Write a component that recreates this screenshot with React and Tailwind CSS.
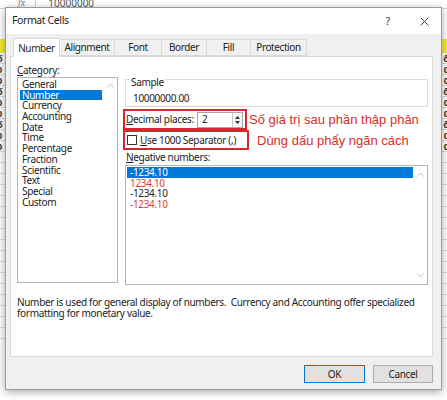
import React from 'react';

const font = { fontFamily: '"Noto Sans", "Open Sans", sans-serif' };
const redFont = { fontFamily: '"Liberation Sans", Arial, sans-serif' };

const categories = [
  'General', 'Number', 'Currency', 'Accounting', 'Date', 'Time',
  'Percentage', 'Fraction', 'Scientific', 'Text', 'Special', 'Custom',
];

const negatives = [
  { label: '-1234.10', tone: 'selected' },
  { label: '1234.10', tone: 'red' },
  { label: '-1234.10', tone: 'black' },
  { label: '-1234.10', tone: 'red' },
];

const tabs = [
  { label: 'Number', w: 'w-[47px]' },
  { label: 'Alignment', w: 'w-[55px]' },
  { label: 'Font', w: 'w-[47px]' },
  { label: 'Border', w: 'w-[45px]' },
  { label: 'Fill', w: 'w-[44px]' },
  { label: 'Protection', w: 'w-[56px]' },
];

function ScrollArrow({ up }) {
  return (
    <svg width="7" height="5" viewBox="0 0 7 5" className="text-[#c4c4c4]">
      <path d={up ? 'M0.5 4.5 L3.5 1 L6.5 4.5' : 'M0.5 0.5 L3.5 4 L6.5 0.5'} fill="none" stroke="currentColor" strokeWidth="1" />
    </svg>
  );
}

function ExcelBackdrop() {
  return (
    <div className="absolute inset-0 flex flex-col">
      <div className="h-[9px] bg-white flex items-end text-[10px] leading-none text-[#555] border-b border-[#d4d4d4]">
        <span className="ml-[18px] italic font-serif text-[#888]">fx</span>
        <span className="ml-[10px] w-px h-[9px] bg-[#ccc]" />
        <span className="ml-[12px]">10000000</span>
      </div>
      <div className="h-[30px] bg-white" />
      <div className="h-[14px] bg-[#f4ea3a]" />
      <div className="flex-1 flex flex-col">
        {Array.from({ length: 26 }).map((_, i) => (
          <div key={i} className="h-[11px] border-b border-[#dcdcdc] flex justify-between text-[9px] leading-[11px] font-bold text-[#333]">
            <span className="-ml-[3px]">{i < 9 ? (i % 3 === 0 ? 'ố' : '0') : ''}</span>
            <span className="-mr-[2px]">{i < 9 ? (i % 3 === 0 ? 'ố' : '0') : ''}</span>
          </div>
        ))}
      </div>
    </div>
  );
}

export default function App() {
  return (
    <div className="relative w-[447px] h-[400px] overflow-hidden bg-white text-[#1a1a1a]" style={font}>
      <ExcelBackdrop />

      {/* Dialog window */}
      <div className="absolute left-[5px] top-[7px] w-[437px] h-[383px] flex flex-col bg-[#f0f0f0] border border-[#9a9a9a] shadow-[0_2px_8px_rgba(0,0,0,0.35)] text-[10px] tracking-[-0.33px]">
        {/* Title bar */}
        <div className="h-[26px] shrink-0 bg-white flex items-center pl-[6px] pr-[12px]">
          <span className="text-[10.5px] tracking-[-0.4px] text-[#222]">Format Cells</span>
          <span className="ml-auto mr-[30px] text-[11px] text-[#444]">?</span>
          <svg width="9" height="9" viewBox="0 0 9 9" className="text-[#444]">
            <path d="M0.5 0.5 L8.5 8.5 M8.5 0.5 L0.5 8.5" stroke="currentColor" strokeWidth="1" />
          </svg>
        </div>

        <div className="flex-1 flex flex-col pl-[4px] pr-[8px]">
          {/* Tabs */}
          <div className="flex items-end h-[22px] pl-[3px] relative z-10 tracking-[-0.4px]">
            {tabs.map((t, i) =>
              i === 0 ? (
                <div key={t.label} className={`${t.w} h-[19px] -mb-px bg-white border border-b-0 border-[#d9d9d9] flex items-center justify-center text-[#222]`}>
                  {t.label}
                </div>
              ) : (
                <div key={t.label} className={`${t.w} h-[17px] bg-[#f0f0f0] border border-l-0 border-[#d9d9d9] flex items-center justify-center text-[#222]`}>
                  {t.label}
                </div>
              )
            )}
          </div>

          {/* Panel */}
          <div className="h-[301px] shrink-0 bg-white border border-[#d9d9d9] flex flex-col">
            <div className="flex pl-[6px] pt-[7px]">
              {/* Category column */}
              <div className="w-[101px] shrink-0 flex flex-col">
                <div className="leading-[12px] text-[#222]"><u>C</u>ategory:</div>
                <div className="mt-[1px] h-[206px] border border-[#b4b4b4] flex">
                  <div className="flex-1 pt-[1px] pl-[2px]">
                    {categories.map((c) => (
                      <div
                        key={c}
                        className={`h-[10.7px] leading-[10.7px] pl-[2px] w-[82px] ${c === 'Number' ? 'bg-[#0078d7] text-white' : 'text-[#222]'}`}
                      >
                        {c}
                      </div>
                    ))}
                  </div>
                  <div className="w-[14px] flex justify-center pt-[5px]">
                    <ScrollArrow up />
                  </div>
                </div>
              </div>

              {/* Right column */}
              <div className="ml-[5px] w-[305px] flex flex-col">
                {/* Sample */}
                <div className="ml-[2px] mt-[15px] h-[28px] border border-[#dcdcdc] relative pl-[7px]">
                  <span className="absolute -top-[4px] left-[4px] bg-white px-[1px] leading-[12px] text-[#222]">Sample</span>
                  <div className="mt-[12px] leading-[12px] text-[#222]">10000000.00</div>
                </div>

                {/* Decimal places row */}
                <div className="mt-[2px] flex items-center h-[21px]">
                  <div className="w-[124px] h-[21px] border-2 border-[#d9262c] flex items-center pl-[1px] pr-[2px]">
                    <span className="whitespace-nowrap text-[#222]"><u>D</u>ecimal places:</span>
                    <div className="ml-auto w-[46px] h-[16px] border border-[#a8a8a8] flex items-center">
                      <span className="pl-[4px] text-[#222]">2</span>
                      <div className="ml-auto w-[10px] h-full border-l border-[#c8c8c8] flex flex-col items-center justify-center gap-[2px] bg-[#f4f4f4]">
                        <svg width="5" height="3" viewBox="0 0 5 3"><path d="M0 3 L2.5 0 L5 3 Z" fill="#333" /></svg>
                        <svg width="5" height="3" viewBox="0 0 5 3"><path d="M0 0 L2.5 3 L5 0 Z" fill="#333" /></svg>
                      </div>
                    </div>
                  </div>
                  <span className="ml-[2px] text-[13px] leading-none tracking-normal text-[#d42f2a] whitespace-nowrap" style={redFont}>
                    Số giá trị sau phần thập phân
                  </span>
                </div>

                {/* Separator row */}
                <div className="flex items-center h-[20px]">
                  <div className="w-[126px] h-[20px] border-2 border-[#d9262c] flex items-center pl-[2px]">
                    <span className="w-[10px] h-[10px] border border-[#333] bg-white shrink-0" />
                    <span className="ml-[3px] whitespace-nowrap text-[#222]"><u>U</u>se 1000 Separator (,)</span>
                  </div>
                  <span className="ml-[8px] text-[13px] leading-none tracking-normal text-[#d42f2a] whitespace-nowrap" style={redFont}>
                    Dùng dấu phẩy ngăn cách
                  </span>
                </div>

                {/* Negative numbers */}
                <div className="ml-[3px] mt-[1px] leading-[12px] text-[#222]"><u>N</u>egative numbers:</div>
                <div className="ml-[2px] mt-[2px] h-[120px] border border-[#b4b4b4] flex">
                  <div className="flex-1 pt-[1px] pl-[1px]">
                    {negatives.map((n, i) => (
                      <div
                        key={i}
                        className={`h-[10.7px] leading-[10.7px] pl-[3px] ${
                          n.tone === 'selected' ? 'bg-[#0078d7] text-white' : n.tone === 'red' ? 'text-[#e03a3a]' : 'text-[#222]'
                        }`}
                      >
                        {n.label}
                      </div>
                    ))}
                  </div>
                  <div className="w-[14px] flex flex-col items-center justify-between py-[6px]">
                    <ScrollArrow up />
                    <ScrollArrow />
                  </div>
                </div>
              </div>
            </div>

            {/* Description */}
            <div className="mt-[12px] pl-[6px] leading-[11px] text-[#222] whitespace-nowrap">
              Number is used for general display of numbers.&nbsp; Currency and Accounting offer specialized
              <br />
              formatting for monetary value.
            </div>
          </div>

          {/* Buttons */}
          <div className="mt-[8px] flex justify-end gap-[8px]">
            <button className="w-[61px] h-[18px] bg-[#e1e1e1] border border-[#0078d7] text-[#222]">OK</button>
            <button className="w-[60px] h-[18px] bg-[#e1e1e1] border border-[#adadad] text-[#222]">Cancel</button>
          </div>
        </div>
      </div>
    </div>
  );
}
